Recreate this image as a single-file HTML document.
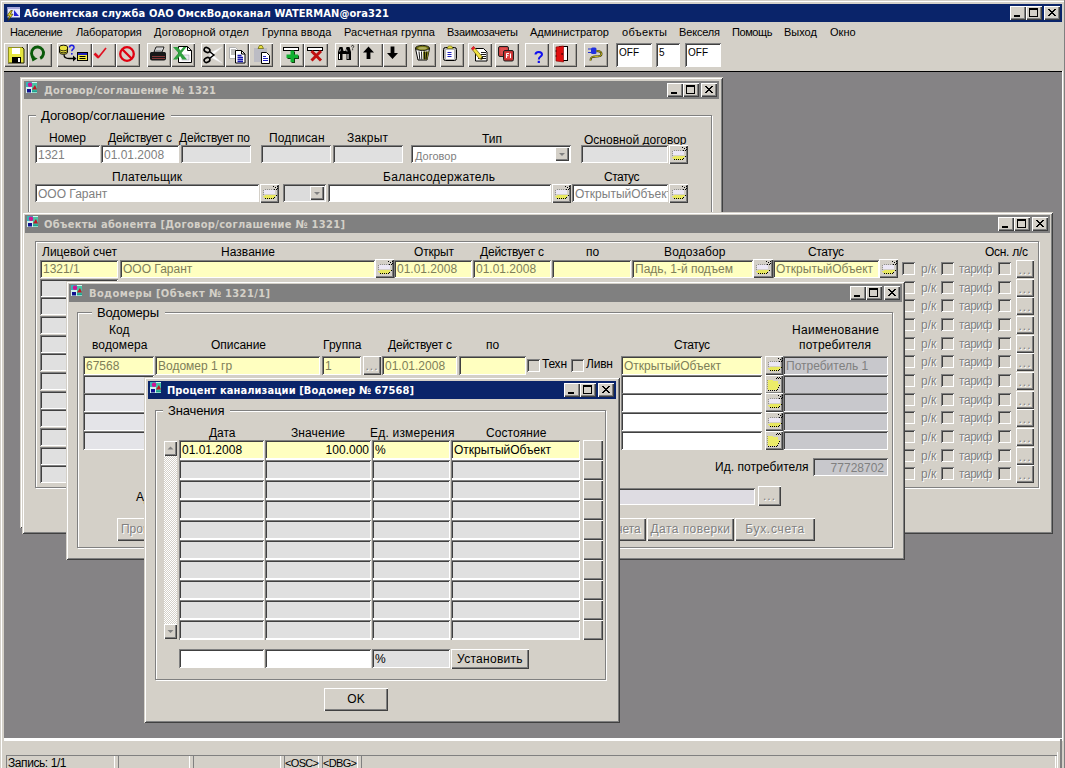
<!DOCTYPE html><html lang="ru"><head><meta charset="utf-8"><title>Абонентская служба</title><style>
html,body{margin:0;padding:0}
body{width:1065px;height:768px;overflow:hidden;background:#d4d0c8;position:relative;font:12px/14px 'Liberation Sans',sans-serif;color:#000}
#app{position:absolute;left:0;top:0;width:1065px;height:768px;overflow:hidden;background:#d4d0c8}
#app div,#app span,#app svg{position:absolute;box-sizing:border-box}
.t{white-space:pre;height:14px;line-height:14px}
.ft{white-space:pre;height:14px;line-height:14px}
.f2{box-shadow:inset 1px 1px 0 #808080,inset 0 -2px 0 #fff,inset -1px 0 0 #fff,inset 2px 2px 0 #404040;overflow:hidden}
.f{box-shadow:inset 1px 1px 0 #808080,inset -1px -1px 0 #fff,inset 2px 2px 0 #404040;overflow:hidden}
.b{background:#d4d0c8;box-shadow:inset 1px 1px 0 #fff,inset -1px -1px 0 #404040,inset -2px -2px 0 #808080;overflow:hidden}
.tbb{box-shadow:inset 1px 1px 0 #fff,inset -1px -1px 0 #484848,inset -2px -2px 0 #a4a098}
.cb3{box-shadow:inset 1px 1px 0 #fff,inset -1px -1px 0 #404040,inset -2px -2px 0 #808080}
.cb{background:#d4d0c8;box-shadow:inset 1px 1px 0 #808080,inset -1px -1px 0 #fff,inset 2px 2px 0 #404040}
.win{background:#d4d0c8;box-shadow:inset 1px 1px 0 #d4d0c8,inset -1px -1px 0 #404040,inset 2px 2px 0 #fff,inset -2px -2px 0 #808080}
.tb{height:18px}
.grp{border:1px solid #808080;box-shadow:1px 1px 0 #fff,inset 1px 1px 0 #fff}
.ic{left:0;top:0}
.dots{left:0;right:0;top:3px;text-align:center;color:#808080;text-shadow:1px 1px 0 #fff;font-size:12px;line-height:14px;letter-spacing:1px}
.sbt{background-color:#d4d0c8;background-image:linear-gradient(45deg,#fff 25%,transparent 25%,transparent 75%,#fff 75%),linear-gradient(45deg,#fff 25%,transparent 25%,transparent 75%,#fff 75%);background-size:2px 2px;background-position:0 0,1px 1px}
.bt{left:0;right:0;text-align:center;white-space:pre;line-height:14px}
.dis{color:#808080;text-shadow:1px 1px 0 #fff}
</style></head><body><div id="app">
<div class="a" style="left:1px;top:1px;width:1064px;height:1px;background:#fff"></div>
<div class="a" style="left:1px;top:1px;width:1px;height:767px;background:#fff"></div>
<div class="a" style="left:1064px;top:0;width:1px;height:768px;background:#808080"></div>
<div class="a" style="left:4px;top:4px;width:1058px;height:18px;background:#0a246a"></div>
<div class="a" style="left:6px;top:5px;width:16px;height:16px"><svg class="ic" width="16" height="16" viewBox="0 0 16 16"><rect x="1.500" y="2" width="12.500" height="10.500" fill="#e6e6fc"/><rect x="1.500" y="2" width="12.500" height="2" fill="#a8a8dc"/><path d="M8 5l5 6H8z" fill="#2424d4"/><path d="M4.800 5.500L1 10.800h2.600L2 15.500l5-6.300H4.400l2-3.700z" fill="#f0e020" stroke="#3c3000" stroke-width=".7"/></svg></div>
<span class="t " style="top:7px;left:24px;font-size:11px;font-weight:bold;font-family:'DejaVu Sans Condensed','DejaVu Sans','Liberation Sans',sans-serif;color:#fff;letter-spacing:0.10px;">Абонентская служба ОАО ОмскВодоканал WATERMAN@ora321</span>
<div class="b cb3" style="left:1010px;top:6px;width:16px;height:14px;"><svg width="16" height="14" class="ic"><rect x="4" y="9" width="6" height="2" fill="#000"/></svg></div>
<div class="b cb3" style="left:1026px;top:6px;width:16px;height:14px;"><svg width="16" height="14" class="ic"><rect x="3.5" y="2.5" width="8" height="8" fill="none" stroke="#000"/><rect x="3" y="2" width="9" height="2" fill="#000"/></svg></div>
<div class="b cb3" style="left:1044px;top:6px;width:16px;height:14px;"><svg width="16" height="14" class="ic"><path d="M4 3l7 7M5 3l7 7M11 3l-7 7M12 3l-7 7" stroke="#000" stroke-width="1" fill="none" shape-rendering="crispEdges"/></svg></div>
<span class="t " style="top:25px;left:10px;font-size:11px;letter-spacing:-0.46px;">Население</span>
<span class="t " style="top:25px;left:76px;font-size:11px;letter-spacing:-0.13px;">Лаборатория</span>
<span class="t " style="top:25px;left:154px;font-size:11px;letter-spacing:0.19px;">Договорной отдел</span>
<span class="t " style="top:25px;left:262px;font-size:11px;letter-spacing:0.13px;">Группа ввода</span>
<span class="t " style="top:25px;left:344px;font-size:11px;letter-spacing:0.08px;">Расчетная группа</span>
<span class="t " style="top:25px;left:447px;font-size:11px;letter-spacing:-0.23px;">Взаимозачеты</span>
<span class="t " style="top:25px;left:530px;font-size:11px;letter-spacing:-0.04px;">Администратор</span>
<span class="t " style="top:25px;left:622px;font-size:11px;letter-spacing:0.34px;">объекты</span>
<span class="t " style="top:25px;left:679px;font-size:11px;letter-spacing:-0.16px;">Векселя</span>
<span class="t " style="top:25px;left:732px;font-size:11px;letter-spacing:-0.42px;">Помощь</span>
<span class="t " style="top:25px;left:784px;font-size:11px;letter-spacing:-0.01px;">Выход</span>
<span class="t " style="top:25px;left:830px;font-size:11px;letter-spacing:0.01px;">Окно</span>
<div class="b tbb" style="left:4px;top:43px;width:24px;height:24px;"><svg class="ic" width="23" height="23" viewBox="0 0 23 23"><path d="M4 4h14l2 2v14H4z" fill="#e4e440"/><path d="M18 4l2 2v14H4" fill="none" stroke="#202000" stroke-width="1"/><path d="M4.500 20V4.500H18" fill="none" stroke="#909020" stroke-width="1"/><rect x="8" y="5" width="8" height="6" fill="#fff"/><rect x="8" y="14" width="9" height="6" fill="#000"/><rect x="14" y="15" width="2" height="4" fill="#fff"/></svg></div>
<div class="b tbb" style="left:28px;top:43px;width:24px;height:24px;"><svg class="ic" width="23" height="23" viewBox="0 0 23 23"><path d="M12.200 15.400A6 6 0 1 0 6 14.900" fill="none" stroke="#0a5a0a" stroke-width="2.900"/><path d="M2.700 12.500l7 3-5.200 3z" fill="#0a5a0a"/></svg></div>
<div class="b tbb" style="left:57px;top:43px;width:35px;height:24px;"><svg class="ic" width="34" height="23" viewBox="0 0 34 23"><ellipse cx="6.5" cy="4" rx="4" ry="1.8" fill="#e8e040" stroke="#000" stroke-width=".9"/><path d="M2.5 4v5.5c0 1 1.8 1.8 4 1.8s4-.8 4-1.8V4" fill="#e8e040" stroke="#000" stroke-width=".9"/><path d="M2.5 6c0 1 1.8 1.8 4 1.8s4-.8 4-1.8M2.5 8c0 1 1.8 1.8 4 1.8s4-.8 4-1.8" fill="none" stroke="#000" stroke-width=".8"/><path d="M12.5 4.5c0-3 4.5-3 4.500 0 0 1.800-2.200 1.600-2.200 3.800" fill="none" stroke="#2020e0" stroke-width="1.500"/><rect x="14" y="10" width="1.600" height="1.600" fill="#2020e0"/><path d="M7 11.500c0 3 2 4 5 4h5" fill="none" stroke="#000" stroke-width="1.300"/><path d="M16 12.500l3.500 3-3.500 3z" fill="#000"/><rect x="20.500" y="9.500" width="10" height="8" fill="#f0e840" stroke="#000"/><rect x="21" y="10" width="9" height="2" fill="#2020c0"/><path d="M22.500 13.500h6M22.500 15.500h6" stroke="#000"/></svg></div>
<div class="b tbb" style="left:92px;top:43px;width:24px;height:24px;"><svg class="ic" width="23" height="23" viewBox="0 0 23 23"><path d="M2.500 10.500l4 4" fill="none" stroke="#e01020" stroke-width="2.600"/><path d="M6 15l8-10" fill="none" stroke="#e01020" stroke-width="1.700"/></svg></div>
<div class="b tbb" style="left:116px;top:43px;width:24px;height:24px;"><svg class="ic" width="23" height="23" viewBox="0 0 23 23"><circle cx="11" cy="11" r="6.800" fill="none" stroke="#e00010" stroke-width="2.300"/><path d="M6 6l10 10" stroke="#e00010" stroke-width="2.300"/></svg></div>
<div class="b tbb" style="left:147px;top:43px;width:24px;height:24px;"><svg class="ic" width="23" height="23" viewBox="0 0 23 23"><path d="M7 9l2-5h8l-2 5z" fill="#fff" stroke="#000" stroke-width=".9"/><path d="M3 10.500c0-1 1-1.500 2-1.500h12c1 0 2 .5 2 1.500v5c0 1-1 2-2 2h-12c-1 0-2-1-2-2z" fill="#181818"/><path d="M5 13.500h13M5 15.500h13" stroke="#a04040" stroke-width=".8"/><path d="M9 6h6M8.500 7.500h6" stroke="#808080" stroke-width=".7"/></svg></div>
<div class="b tbb" style="left:171px;top:43px;width:24px;height:24px;"><svg class="ic" width="23" height="23" viewBox="0 0 23 23"><path d="M7.500 3.500h9l4 4v12h-13z" fill="#fff" stroke="#000"/><path d="M16.500 3.500v4h4" fill="none" stroke="#000"/><rect x="11" y="12" width="7" height="5" fill="#e8e8f0" stroke="#a0a0b0" stroke-width=".6"/><path d="M2 4l4.500 0 3 3.500 3-3.500 3 0-5 6 5.500 6.500-4.500 0-2.500-3.500-3 3.500-4 0 5.500-6.500z" fill="#30a040"/></svg></div>
<div class="b tbb" style="left:201px;top:43px;width:24px;height:24px;"><svg class="ic" width="23" height="23" viewBox="0 0 23 23"><path d="M9 10l12-6-9 8 9 8-12-6z" fill="#fff" stroke="#e8e8e8" stroke-width=".5"/><ellipse cx="6" cy="7" rx="3" ry="2.300" fill="none" stroke="#000" stroke-width="1.600" transform="rotate(25 6 7)"/><ellipse cx="6" cy="17" rx="3" ry="2.300" fill="none" stroke="#000" stroke-width="1.600" transform="rotate(-25 6 17)"/><path d="M8.500 8.500l5 4M8.500 15.500l5-4" stroke="#000" stroke-width="1.600"/></svg></div>
<div class="b tbb" style="left:225px;top:43px;width:24px;height:24px;"><svg class="ic" width="23" height="23" viewBox="0 0 23 23"><path d="M4.500 4.500h6l3 3v8h-9z" fill="#fff" stroke="#a8a8a8" stroke-width=".9"/><path d="M6 7h5M6 9h5M6 11h4" stroke="#707070" stroke-width=".9"/><path d="M10.500 7.500h6l3.500 3.500v9h-9.500z" fill="#fff" stroke="#000"/><path d="M16.500 7.500v3.500h3.500" fill="none" stroke="#000"/><path d="M12.500 12.500h4M12.500 14.500h5.500M12.500 16.500h5.500M12.500 18.500h5.500" stroke="#1818b0" stroke-width="1.300"/></svg></div>
<div class="b tbb" style="left:249px;top:43px;width:24px;height:24px;"><svg class="ic" width="23" height="23" viewBox="0 0 23 23"><rect x="5" y="5" width="13" height="14" fill="#bcbcc4"/><path d="M9 5.500l1.500-3h2.500l1.500 3z" fill="#e8e040" stroke="#606000" stroke-width=".7"/><path d="M12.500 9.500h5l3 3v8h-8z" fill="#fff" stroke="#000"/><path d="M14 13.500h3M14 15.500h5M14 17.500h5" stroke="#2020c0" stroke-width="1.200"/></svg></div>
<div class="b tbb" style="left:280px;top:43px;width:24px;height:24px;"><svg class="ic" width="23" height="23" viewBox="0 0 23 23"><rect x="3.500" y="4.500" width="15" height="3" fill="#fff" stroke="#000"/><path d="M11.500 8.500h3.500v4h4v3.500h-4v4h-3.500v-4h-4v-3.500h4z" fill="#104010"/><path d="M10.500 7.500h3.500v4h4v3.500h-4v4h-3.500v-4h-4v-3.500h4z" fill="#10b030"/></svg></div>
<div class="b tbb" style="left:304px;top:43px;width:24px;height:24px;"><svg class="ic" width="23" height="23" viewBox="0 0 23 23"><rect x="3.500" y="4.500" width="15" height="3" fill="#fff" stroke="#000"/><path d="M7.500 8l9.500 9.500M17 8l-9.500 9.500" stroke="#c01010" stroke-width="3"/></svg></div>
<div class="b tbb" style="left:335px;top:43px;width:24px;height:24px;"><svg class="ic" width="23" height="23" viewBox="0 0 23 23"><path d="M3 9l1.500-5h3l1 4h2l1-4h3l1.500 5v8h-4.500v-6h-4v6h-4.500z" fill="#000"/><path d="M4.500 11v5M13 11v5" stroke="#fff" stroke-width="1"/><path d="M5.500 6.500l-.8 2M11.500 6.500l.5 2" stroke="#fff" stroke-width=".8"/><path d="M16.500 3.500c0-1.500 2.200-1.500 2.200 0 0 1-1.100 1-1.100 2" fill="none" stroke="#000" stroke-width=".8"/><rect x="17.200" y="6.300" width=".9" height=".9" fill="#000"/></svg></div>
<div class="b tbb" style="left:359px;top:43px;width:24px;height:24px;"><svg class="ic" width="23" height="23" viewBox="0 0 23 23"><path d="M9.500 3.500l5.500 6h-3.600v6.500h-3.800v-6.500h-3.600z" fill="#000"/></svg></div>
<div class="b tbb" style="left:383px;top:43px;width:24px;height:24px;"><svg class="ic" width="23" height="23" viewBox="0 0 23 23"><path d="M9.500 16l5.500-6h-3.600v-6.500h-3.800v6.500h-3.600z" fill="#000"/></svg></div>
<div class="b tbb" style="left:412px;top:43px;width:24px;height:24px;"><svg class="ic" width="23" height="23" viewBox="0 0 23 23"><path d="M3.500 5.500l2.500 11.500h9l2.500-11.500z" fill="#fff" stroke="#000"/><ellipse cx="10.500" cy="5" rx="7" ry="2.600" fill="#707010" stroke="#000" stroke-width=".8"/><ellipse cx="10.500" cy="5.200" rx="4.500" ry="1.300" fill="#b0b060"/><path d="M11 8.500l.3 8h4l1.500-8z" fill="#808018"/><path d="M7 8.500l.8 8M9.500 8.500l.3 8M12.500 8.500l-.2 8M14.800 8.500l-.8 8" stroke="#000" stroke-width=".9"/></svg></div>
<div class="b tbb" style="left:440px;top:43px;width:24px;height:24px;"><svg class="ic" width="23" height="23" viewBox="0 0 23 23"><rect x="3.500" y="4.500" width="13" height="13" rx="2" fill="#b8b8b8" stroke="#000"/><rect x="6" y="7" width="8" height="9" fill="#fff"/><path d="M7.500 9.500h4M7.500 11.500h4M7.500 13.500h4" stroke="#2020c0" stroke-width="1.200"/><path d="M7 5.500l1.500-2.500h3l1.500 2.500z" fill="#e8e040" stroke="#606000" stroke-width=".6"/></svg></div>
<div class="b tbb" style="left:468px;top:43px;width:24px;height:24px;"><svg class="ic" width="23" height="23" viewBox="0 0 23 23"><path d="M7.500 5.500h8l3.500 3.500v9h-11.500z" fill="#fff" stroke="#000"/><path d="M13 9.500h5M13 11.500h5M10 15.500h8M13 13.500h5" stroke="#000" stroke-width=".9"/><path d="M3.500 5.500l2-2 9 10.500-.5 2.500-2.500-.5z" fill="#f0e040" stroke="#605000" stroke-width=".7"/><path d="M3 5.500l2.500-2.500 1.800 2-2.500 2.500z" fill="#e02030"/><path d="M12 15.500l2.500.5.500-2.500" fill="#000"/></svg></div>
<div class="b tbb" style="left:495px;top:43px;width:24px;height:24px;"><svg class="ic" width="23" height="23" viewBox="0 0 23 23"><rect x="3.500" y="3.500" width="10" height="10" rx="1.500" fill="#d04040" stroke="#202020"/><rect x="5.500" y="5" width="6" height="6" fill="#e05050"/><rect x="8.500" y="7.500" width="10" height="10.500" rx="1.500" fill="#c03030" stroke="#202020"/><rect x="10.500" y="9.500" width="6" height="6.500" fill="#e04040"/><path d="M11.500 15v-4.500h2.500M11.500 12.700h2M15.500 10.500v4.500" stroke="#fff" stroke-width="1" fill="none"/></svg></div>
<div class="b tbb" style="left:525px;top:43px;width:24px;height:24px;"><svg class="ic" width="23" height="23" viewBox="0 0 23 23"><path d="M10.500 11.500c0-3.500 6.500-3.500 6.500 0 0 2.200-3.200 2-3.200 5" fill="none" stroke="#1010f0" stroke-width="2"/><rect x="12.700" y="17.800" width="2.200" height="2.200" fill="#1010f0"/></svg></div>
<div class="b tbb" style="left:553px;top:43px;width:24px;height:24px;"><svg class="ic" width="23" height="23" viewBox="0 0 23 23"><rect x="6.500" y="3.500" width="8" height="14" fill="#fff" stroke="#000"/><path d="M3 4l7.500-1v16l-7.500-1z" fill="#e01010"/><path d="M3 4l7.500-1v16l-7.500-1z" fill="none" stroke="#800000" stroke-width=".6"/><rect x="8.500" y="10" width="1.200" height="2" fill="#400000"/><path d="M2.500 8h1M2.500 13h1" stroke="#000"/></svg></div>
<div class="b tbb" style="left:584px;top:43px;width:24px;height:24px;"><svg class="ic" width="23" height="23" viewBox="0 0 23 23"><path d="M4 6h3.500M4 9.500h3.500" stroke="#2030d0" stroke-width="1.200"/><rect x="7" y="4.500" width="5.500" height="6.500" rx="1.500" fill="#2030e0"/><path d="M12.500 8c4 0 5 1 5 3s-2 2.500-5.500 2.500-5.500.5-5.500 4" fill="none" stroke="#303000" stroke-width="2"/><path d="M12.500 8c4 0 5 1 5 3s-2 2.500-5.500 2.500-5.500.5-5.500 4" fill="none" stroke="#c8b820" stroke-width="1"/></svg></div>
<div class="f" style="left:616px;top:43px;width:36px;height:24px;background:#fff;"></div>
<span class="t " style="top:46px;left:619px;font-size:10px;">OFF</span>
<div class="f" style="left:656px;top:43px;width:24px;height:24px;background:#fff;"></div>
<span class="t " style="top:46px;left:659px;font-size:10px;">5</span>
<div class="f" style="left:685px;top:43px;width:36px;height:24px;background:#fff;"></div>
<span class="t " style="top:46px;left:688px;font-size:10px;">OFF</span>
<div class="a" style="left:4px;top:71px;width:1058px;height:667px;background:#858385"></div>
<div class="a" style="left:4px;top:71px;width:1058px;height:1px;background:#000"></div>
<div class="a" style="left:4px;top:738px;width:1059px;height:3px;background:#fff"></div>
<div class="a" style="left:1062px;top:71px;width:1px;height:670px;background:#fff"></div>
<div class="a" style="left:6px;top:755px;width:1051px;height:1px;background:#808080"></div>
<div class="a" style="left:6px;top:756px;width:109px;height:14px;border-left:1px solid #808080;border-right:1px solid #fff"></div>
<div class="a" style="left:118px;top:756px;width:72px;height:14px;border-left:1px solid #808080;border-right:1px solid #fff"></div>
<div class="a" style="left:193px;top:756px;width:88px;height:14px;border-left:1px solid #808080;border-right:1px solid #fff"></div>
<div class="a" style="left:284px;top:756px;width:35px;height:14px;border-left:1px solid #808080;border-right:1px solid #fff"></div>
<div class="a" style="left:322px;top:756px;width:36px;height:14px;border-left:1px solid #808080;border-right:1px solid #fff"></div>
<div class="a" style="left:361px;top:756px;width:695px;height:14px;border-left:1px solid #808080;border-right:1px solid #fff"></div>
<div class="a" style="left:1060px;top:739px;width:2px;height:29px;background:#808080"></div>
<div class="a" style="left:1057px;top:752px;width:1px;height:16px;background:#fff"></div>
<span class="t " style="top:756px;left:8px;letter-spacing:-0.42px;">Запись: 1/1</span>
<span class="t " style="top:756px;left:285px;font-size:11px;letter-spacing:-0.67px;">&lt;OSC&gt;</span>
<span class="t " style="top:756px;left:323px;font-size:11px;letter-spacing:-0.67px;">&lt;DBG&gt;</span>
<div class="win" style="left:20px;top:77px;width:703px;height:451px"></div>
<div class="tb" style="left:24px;top:81px;width:695px;background:#808080"></div>
<div class="a" style="left:26px;top:82px;width:12px;height:12px"><svg class="ic" width="12" height="12" viewBox="0 0 12 12"><rect x="0" y="0" width="11" height="11" fill="#d4f2ee"/><rect x="0" y="0" width="6" height="5" fill="#38b4b8"/><rect x="6" y="1" width="5" height="9.500" fill="#48c4a4"/><circle cx="4" cy="2.800" r="2.200" fill="#d01494"/><path d="M6 7.500l3-4.500 2 4.500z" fill="#c01424"/><rect x="1" y="7" width="4" height="3.500" fill="#101090"/><rect x="6" y="8.500" width="5" height="1.500" fill="#20a090"/></svg></div>
<span class="t " style="top:84px;left:44px;font-size:11px;font-weight:bold;font-family:'DejaVu Sans Condensed','DejaVu Sans','Liberation Sans',sans-serif;color:#d4d0c8;letter-spacing:0.20px;">Договор/соглашение № 1321</span>
<div class="b cb3" style="left:667px;top:83px;width:16px;height:14px;"><svg width="16" height="14" class="ic"><rect x="4" y="9" width="6" height="2" fill="#000"/></svg></div>
<div class="b cb3" style="left:683px;top:83px;width:16px;height:14px;"><svg width="16" height="14" class="ic"><rect x="3.5" y="2.5" width="8" height="8" fill="none" stroke="#000"/><rect x="3" y="2" width="9" height="2" fill="#000"/></svg></div>
<div class="b cb3" style="left:701px;top:83px;width:16px;height:14px;"><svg width="16" height="14" class="ic"><path d="M4 3l7 7M5 3l7 7M11 3l-7 7M12 3l-7 7" stroke="#000" stroke-width="1" fill="none" shape-rendering="crispEdges"/></svg></div>
<div class="grp" style="left:28px;top:115px;width:684px;height:183px"></div>
<div class="a" style="left:36px;top:113px;width:135px;height:6px;background:#d4d0c8"></div>
<span class="t " style="top:109px;left:41px;font-size:13px;letter-spacing:-0.07px;">Договор/соглашение</span>
<span class="t " style="top:131px;left:49px;">Номер</span>
<span class="t " style="top:131px;left:108px;letter-spacing:-0.21px;">Действует с</span>
<span class="t " style="top:131px;left:179px;letter-spacing:-0.21px;">Действует по</span>
<span class="t " style="top:131px;left:269px;letter-spacing:0.14px;">Подписан</span>
<span class="t " style="top:131px;left:347px;letter-spacing:0.21px;">Закрыт</span>
<span class="t " style="top:132px;left:482px;">Тип</span>
<span class="t " style="top:133px;left:584px;letter-spacing:0.01px;">Основной договор</span>
<div class="f" style="left:35px;top:145px;width:65px;height:18px;background:#fff;"><span class="ft" style="left:3px;top:3px;color:#808080">1321</span></div>
<div class="f" style="left:101px;top:145px;width:78px;height:18px;background:#fff;"><span class="ft" style="left:3px;top:3px;color:#808080">01.01.2008</span></div>
<div class="f" style="left:181px;top:145px;width:70px;height:18px;background:#e0e0e0;"></div>
<div class="f" style="left:261px;top:145px;width:70px;height:18px;background:#e0e0e0;"></div>
<div class="f" style="left:333px;top:145px;width:70px;height:18px;background:#e0e0e0;"></div>
<div class="f" style="left:411px;top:145px;width:160px;height:18px;background:#fff;"></div>
<span class="t" style="left:415px;top:149px;color:#808080;font-size:11px">Договор</span>
<div class="b" style="left:555px;top:147px;width:14px;height:14px;"><svg class="ic" width="14" height="14"><path d="M4 6h6l-3 3z" fill="#808080"/><path d="M5 7h6l-3 3z" fill="#fff" opacity=".0"/></svg></div>
<div class="f" style="left:581px;top:145px;width:87px;height:18px;background:#e0e0e0;"></div>
<div class="b" style="left:669px;top:145px;width:19px;height:19px;"><svg class="ic" width="19" height="19" viewBox="0 0 19 19" shape-rendering="crispEdges"><rect x="4" y="6" width="11" height="4" fill="#ece8f6"/><path d="M3 12.500L6 11h10l-3 3.500H5z" fill="#e8e860"/><path d="M5 14.500h9" stroke="#000" stroke-dasharray="1 1"/><path d="M5 5.500h9" stroke="#909090" stroke-dasharray="1 1"/><path d="M3.500 6v5" stroke="#909090" stroke-dasharray="1 1"/><path d="M14 13.500h1M16 11.500h1M14 5.500h1M16 5.500h1M17 4.500h1M13 2.500h1M17 2.500h1M15 3.500h1" stroke="#000"/></svg></div>
<span class="t " style="top:170px;left:112px;letter-spacing:0.14px;">Плательщик</span>
<span class="t " style="top:170px;left:383px;letter-spacing:0.33px;">Балансодержатель</span>
<span class="t " style="top:170px;left:604px;letter-spacing:-0.49px;">Статус</span>
<div class="f" style="left:35px;top:184px;width:224px;height:18px;background:#fff;"><span class="ft" style="left:3px;top:3px;color:#808080">ООО Гарант</span></div>
<div class="b" style="left:260px;top:184px;width:19px;height:19px;"><svg class="ic" width="19" height="19" viewBox="0 0 19 19" shape-rendering="crispEdges"><rect x="4" y="6" width="11" height="4" fill="#ece8f6"/><path d="M3 12.500L6 11h10l-3 3.500H5z" fill="#e8e860"/><path d="M5 14.500h9" stroke="#000" stroke-dasharray="1 1"/><path d="M5 5.500h9" stroke="#909090" stroke-dasharray="1 1"/><path d="M3.500 6v5" stroke="#909090" stroke-dasharray="1 1"/><path d="M14 13.500h1M16 11.500h1M14 5.500h1M16 5.500h1M17 4.500h1M13 2.500h1M17 2.500h1M15 3.500h1" stroke="#000"/></svg></div>
<div class="f" style="left:283px;top:184px;width:43px;height:18px;background:#dcdcdc;"></div>
<div class="b" style="left:310px;top:186px;width:14px;height:14px;"><svg class="ic" width="14" height="14"><path d="M4 6h6l-3 3z" fill="#808080"/><path d="M5 7h6l-3 3z" fill="#fff" opacity=".0"/></svg></div>
<div class="f" style="left:328px;top:184px;width:223px;height:18px;background:#fff;"></div>
<div class="b" style="left:552px;top:184px;width:19px;height:19px;"><svg class="ic" width="19" height="19" viewBox="0 0 19 19" shape-rendering="crispEdges"><rect x="4" y="6" width="11" height="4" fill="#ece8f6"/><path d="M3 12.500L6 11h10l-3 3.500H5z" fill="#e8e860"/><path d="M5 14.500h9" stroke="#000" stroke-dasharray="1 1"/><path d="M5 5.500h9" stroke="#909090" stroke-dasharray="1 1"/><path d="M3.500 6v5" stroke="#909090" stroke-dasharray="1 1"/><path d="M14 13.500h1M16 11.500h1M14 5.500h1M16 5.500h1M17 4.500h1M13 2.500h1M17 2.500h1M15 3.500h1" stroke="#000"/></svg></div>
<div class="f" style="left:572px;top:184px;width:96px;height:18px;background:#fff;"><span class="ft" style="left:3px;top:3px;color:#808080">ОткрытыйОбъект</span></div>
<div class="b" style="left:669px;top:184px;width:19px;height:19px;"><svg class="ic" width="19" height="19" viewBox="0 0 19 19" shape-rendering="crispEdges"><rect x="4" y="6" width="11" height="4" fill="#ece8f6"/><path d="M3 12.500L6 11h10l-3 3.500H5z" fill="#e8e860"/><path d="M5 14.500h9" stroke="#000" stroke-dasharray="1 1"/><path d="M5 5.500h9" stroke="#909090" stroke-dasharray="1 1"/><path d="M3.500 6v5" stroke="#909090" stroke-dasharray="1 1"/><path d="M14 13.500h1M16 11.500h1M14 5.500h1M16 5.500h1M17 4.500h1M13 2.500h1M17 2.500h1M15 3.500h1" stroke="#000"/></svg></div>
<div class="win" style="left:22px;top:212px;width:1031px;height:322px"></div>
<div class="tb" style="left:25px;top:215px;width:1025px;background:#808080"></div>
<div class="a" style="left:27px;top:216px;width:12px;height:12px"><svg class="ic" width="12" height="12" viewBox="0 0 12 12"><rect x="0" y="0" width="11" height="11" fill="#d4f2ee"/><rect x="0" y="0" width="6" height="5" fill="#38b4b8"/><rect x="6" y="1" width="5" height="9.500" fill="#48c4a4"/><circle cx="4" cy="2.800" r="2.200" fill="#d01494"/><path d="M6 7.500l3-4.500 2 4.500z" fill="#c01424"/><rect x="1" y="7" width="4" height="3.500" fill="#101090"/><rect x="6" y="8.500" width="5" height="1.500" fill="#20a090"/></svg></div>
<span class="t " style="top:218px;left:44px;font-size:11px;font-weight:bold;font-family:'DejaVu Sans Condensed','DejaVu Sans','Liberation Sans',sans-serif;color:#d4d0c8;letter-spacing:0.32px;">Объекты абонента [Договор/соглашение № 1321]</span>
<div class="b cb3" style="left:998px;top:217px;width:16px;height:14px;"><svg width="16" height="14" class="ic"><rect x="4" y="9" width="6" height="2" fill="#000"/></svg></div>
<div class="b cb3" style="left:1014px;top:217px;width:16px;height:14px;"><svg width="16" height="14" class="ic"><rect x="3.5" y="2.5" width="8" height="8" fill="none" stroke="#000"/><rect x="3" y="2" width="9" height="2" fill="#000"/></svg></div>
<div class="b cb3" style="left:1032px;top:217px;width:16px;height:14px;"><svg width="16" height="14" class="ic"><path d="M4 3l7 7M5 3l7 7M11 3l-7 7M12 3l-7 7" stroke="#000" stroke-width="1" fill="none" shape-rendering="crispEdges"/></svg></div>
<div class="grp" style="left:35px;top:241px;width:1004px;height:247px"></div>
<span class="t " style="top:245px;left:42px;letter-spacing:0.01px;">Лицевой счет</span>
<span class="t " style="top:245px;left:221px;letter-spacing:0.05px;">Название</span>
<span class="t " style="top:245px;left:414px;letter-spacing:-0.17px;">Открыт</span>
<span class="t " style="top:245px;left:480px;letter-spacing:-0.21px;">Действует с</span>
<span class="t " style="top:245px;left:586px;">по</span>
<span class="t " style="top:245px;left:664px;letter-spacing:0.14px;">Водозабор</span>
<span class="t " style="top:245px;left:808px;letter-spacing:-0.39px;">Статус</span>
<span class="t " style="top:245px;left:985px;letter-spacing:-0.28px;">Осн. л/с</span>
<div class="f" style="left:40px;top:260px;width:78px;height:18px;background:#ffffc0;"><span class="ft" style="left:3px;top:2px;color:#7e7e58">1321/1</span></div>
<div class="f" style="left:120px;top:260px;width:255px;height:18px;background:#ffffc0;"><span class="ft" style="left:3px;top:2px;color:#7e7e58">ООО Гарант</span></div>
<div class="b" style="left:375px;top:259px;width:19px;height:19px;"><svg class="ic" width="19" height="19" viewBox="0 0 19 19" shape-rendering="crispEdges"><rect x="4" y="6" width="11" height="4" fill="#ece8f6"/><path d="M3 12.500L6 11h10l-3 3.500H5z" fill="#e8e860"/><path d="M5 14.500h9" stroke="#000" stroke-dasharray="1 1"/><path d="M5 5.500h9" stroke="#909090" stroke-dasharray="1 1"/><path d="M3.500 6v5" stroke="#909090" stroke-dasharray="1 1"/><path d="M14 13.500h1M16 11.500h1M14 5.500h1M16 5.500h1M17 4.500h1M13 2.500h1M17 2.500h1M15 3.500h1" stroke="#000"/></svg></div>
<div class="f" style="left:394px;top:260px;width:78px;height:18px;background:#ffffc0;"><span class="ft" style="left:3px;top:2px;color:#7e7e58">01.01.2008</span></div>
<div class="f" style="left:473px;top:260px;width:78px;height:18px;background:#ffffc0;"><span class="ft" style="left:3px;top:2px;color:#7e7e58">01.01.2008</span></div>
<div class="f" style="left:552px;top:260px;width:79px;height:18px;background:#ffffc0;"></div>
<div class="f" style="left:632px;top:260px;width:121px;height:18px;background:#ffffc0;"><span class="ft" style="left:3px;top:2px;color:#7e7e58">Падь, 1-й подъем</span></div>
<div class="b" style="left:753px;top:259px;width:20px;height:19px;"><svg class="ic" width="19" height="19" viewBox="0 0 19 19" shape-rendering="crispEdges"><rect x="4" y="6" width="11" height="4" fill="#ece8f6"/><path d="M3 12.500L6 11h10l-3 3.500H5z" fill="#e8e860"/><path d="M5 14.500h9" stroke="#000" stroke-dasharray="1 1"/><path d="M5 5.500h9" stroke="#909090" stroke-dasharray="1 1"/><path d="M3.500 6v5" stroke="#909090" stroke-dasharray="1 1"/><path d="M14 13.500h1M16 11.500h1M14 5.500h1M16 5.500h1M17 4.500h1M13 2.500h1M17 2.500h1M15 3.500h1" stroke="#000"/></svg></div>
<div class="f" style="left:773px;top:260px;width:106px;height:18px;background:#ffffc0;"><span class="ft" style="left:3px;top:2px;color:#7e7e58">ОткрытыйОбъект</span></div>
<div class="b" style="left:879px;top:259px;width:19px;height:19px;"><svg class="ic" width="19" height="19" viewBox="0 0 19 19" shape-rendering="crispEdges"><rect x="4" y="6" width="11" height="4" fill="#ece8f6"/><path d="M3 12.500L6 11h10l-3 3.500H5z" fill="#e8e860"/><path d="M5 14.500h9" stroke="#000" stroke-dasharray="1 1"/><path d="M5 5.500h9" stroke="#909090" stroke-dasharray="1 1"/><path d="M3.500 6v5" stroke="#909090" stroke-dasharray="1 1"/><path d="M14 13.500h1M16 11.500h1M14 5.500h1M16 5.500h1M17 4.500h1M13 2.500h1M17 2.500h1M15 3.500h1" stroke="#000"/></svg></div>
<div class="cb" style="left:902px;top:262px;width:13px;height:13px;"></div>
<span class="t " style="top:262px;left:921px;color:#808080;text-shadow:1px 1px 0 #fff;">р/к</span>
<div class="cb" style="left:941px;top:262px;width:13px;height:13px;"></div>
<span class="t " style="top:262px;left:959px;color:#808080;text-shadow:1px 1px 0 #fff;letter-spacing:-0.45px;">тариф</span>
<div class="cb" style="left:998px;top:262px;width:13px;height:13px;"></div>
<div class="b" style="left:1016px;top:260px;width:18px;height:18px;"><span class="dots">...</span></div>
<div class="f" style="left:40px;top:279px;width:78px;height:18px;background:#e0e0e0;"></div>
<div class="cb" style="left:902px;top:281px;width:13px;height:13px;"></div>
<span class="t " style="top:281px;left:921px;color:#808080;text-shadow:1px 1px 0 #fff;">р/к</span>
<div class="cb" style="left:941px;top:281px;width:13px;height:13px;"></div>
<span class="t " style="top:281px;left:959px;color:#808080;text-shadow:1px 1px 0 #fff;letter-spacing:-0.45px;">тариф</span>
<div class="cb" style="left:998px;top:281px;width:13px;height:13px;"></div>
<div class="b" style="left:1016px;top:279px;width:18px;height:18px;"><span class="dots">...</span></div>
<div class="f" style="left:40px;top:297px;width:78px;height:18px;background:#e0e0e0;"></div>
<div class="cb" style="left:902px;top:299px;width:13px;height:13px;"></div>
<span class="t " style="top:299px;left:921px;color:#808080;text-shadow:1px 1px 0 #fff;">р/к</span>
<div class="cb" style="left:941px;top:299px;width:13px;height:13px;"></div>
<span class="t " style="top:299px;left:959px;color:#808080;text-shadow:1px 1px 0 #fff;letter-spacing:-0.45px;">тариф</span>
<div class="cb" style="left:998px;top:299px;width:13px;height:13px;"></div>
<div class="b" style="left:1016px;top:297px;width:18px;height:18px;"><span class="dots">...</span></div>
<div class="f" style="left:40px;top:316px;width:78px;height:18px;background:#e0e0e0;"></div>
<div class="cb" style="left:902px;top:318px;width:13px;height:13px;"></div>
<span class="t " style="top:318px;left:921px;color:#808080;text-shadow:1px 1px 0 #fff;">р/к</span>
<div class="cb" style="left:941px;top:318px;width:13px;height:13px;"></div>
<span class="t " style="top:318px;left:959px;color:#808080;text-shadow:1px 1px 0 #fff;letter-spacing:-0.45px;">тариф</span>
<div class="cb" style="left:998px;top:318px;width:13px;height:13px;"></div>
<div class="b" style="left:1016px;top:316px;width:18px;height:18px;"><span class="dots">...</span></div>
<div class="f" style="left:40px;top:335px;width:78px;height:18px;background:#e0e0e0;"></div>
<div class="cb" style="left:902px;top:337px;width:13px;height:13px;"></div>
<span class="t " style="top:337px;left:921px;color:#808080;text-shadow:1px 1px 0 #fff;">р/к</span>
<div class="cb" style="left:941px;top:337px;width:13px;height:13px;"></div>
<span class="t " style="top:337px;left:959px;color:#808080;text-shadow:1px 1px 0 #fff;letter-spacing:-0.45px;">тариф</span>
<div class="cb" style="left:998px;top:337px;width:13px;height:13px;"></div>
<div class="b" style="left:1016px;top:335px;width:18px;height:18px;"><span class="dots">...</span></div>
<div class="f" style="left:40px;top:353px;width:78px;height:18px;background:#e0e0e0;"></div>
<div class="cb" style="left:902px;top:355px;width:13px;height:13px;"></div>
<span class="t " style="top:355px;left:921px;color:#808080;text-shadow:1px 1px 0 #fff;">р/к</span>
<div class="cb" style="left:941px;top:355px;width:13px;height:13px;"></div>
<span class="t " style="top:355px;left:959px;color:#808080;text-shadow:1px 1px 0 #fff;letter-spacing:-0.45px;">тариф</span>
<div class="cb" style="left:998px;top:355px;width:13px;height:13px;"></div>
<div class="b" style="left:1016px;top:353px;width:18px;height:18px;"><span class="dots">...</span></div>
<div class="f" style="left:40px;top:372px;width:78px;height:18px;background:#e0e0e0;"></div>
<div class="cb" style="left:902px;top:374px;width:13px;height:13px;"></div>
<span class="t " style="top:374px;left:921px;color:#808080;text-shadow:1px 1px 0 #fff;">р/к</span>
<div class="cb" style="left:941px;top:374px;width:13px;height:13px;"></div>
<span class="t " style="top:374px;left:959px;color:#808080;text-shadow:1px 1px 0 #fff;letter-spacing:-0.45px;">тариф</span>
<div class="cb" style="left:998px;top:374px;width:13px;height:13px;"></div>
<div class="b" style="left:1016px;top:372px;width:18px;height:18px;"><span class="dots">...</span></div>
<div class="f" style="left:40px;top:391px;width:78px;height:18px;background:#e0e0e0;"></div>
<div class="cb" style="left:902px;top:393px;width:13px;height:13px;"></div>
<span class="t " style="top:393px;left:921px;color:#808080;text-shadow:1px 1px 0 #fff;">р/к</span>
<div class="cb" style="left:941px;top:393px;width:13px;height:13px;"></div>
<span class="t " style="top:393px;left:959px;color:#808080;text-shadow:1px 1px 0 #fff;letter-spacing:-0.45px;">тариф</span>
<div class="cb" style="left:998px;top:393px;width:13px;height:13px;"></div>
<div class="b" style="left:1016px;top:391px;width:18px;height:18px;"><span class="dots">...</span></div>
<div class="f" style="left:40px;top:409px;width:78px;height:18px;background:#e0e0e0;"></div>
<div class="cb" style="left:902px;top:411px;width:13px;height:13px;"></div>
<span class="t " style="top:411px;left:921px;color:#808080;text-shadow:1px 1px 0 #fff;">р/к</span>
<div class="cb" style="left:941px;top:411px;width:13px;height:13px;"></div>
<span class="t " style="top:411px;left:959px;color:#808080;text-shadow:1px 1px 0 #fff;letter-spacing:-0.45px;">тариф</span>
<div class="cb" style="left:998px;top:411px;width:13px;height:13px;"></div>
<div class="b" style="left:1016px;top:409px;width:18px;height:18px;"><span class="dots">...</span></div>
<div class="f" style="left:40px;top:428px;width:78px;height:18px;background:#e0e0e0;"></div>
<div class="cb" style="left:902px;top:430px;width:13px;height:13px;"></div>
<span class="t " style="top:430px;left:921px;color:#808080;text-shadow:1px 1px 0 #fff;">р/к</span>
<div class="cb" style="left:941px;top:430px;width:13px;height:13px;"></div>
<span class="t " style="top:430px;left:959px;color:#808080;text-shadow:1px 1px 0 #fff;letter-spacing:-0.45px;">тариф</span>
<div class="cb" style="left:998px;top:430px;width:13px;height:13px;"></div>
<div class="b" style="left:1016px;top:428px;width:18px;height:18px;"><span class="dots">...</span></div>
<div class="f" style="left:40px;top:447px;width:78px;height:18px;background:#e0e0e0;"></div>
<div class="cb" style="left:902px;top:449px;width:13px;height:13px;"></div>
<span class="t " style="top:449px;left:921px;color:#808080;text-shadow:1px 1px 0 #fff;">р/к</span>
<div class="cb" style="left:941px;top:449px;width:13px;height:13px;"></div>
<span class="t " style="top:449px;left:959px;color:#808080;text-shadow:1px 1px 0 #fff;letter-spacing:-0.45px;">тариф</span>
<div class="cb" style="left:998px;top:449px;width:13px;height:13px;"></div>
<div class="b" style="left:1016px;top:447px;width:18px;height:18px;"><span class="dots">...</span></div>
<div class="f" style="left:40px;top:465px;width:78px;height:18px;background:#e0e0e0;"></div>
<div class="cb" style="left:902px;top:467px;width:13px;height:13px;"></div>
<span class="t " style="top:467px;left:921px;color:#808080;text-shadow:1px 1px 0 #fff;">р/к</span>
<div class="cb" style="left:941px;top:467px;width:13px;height:13px;"></div>
<span class="t " style="top:467px;left:959px;color:#808080;text-shadow:1px 1px 0 #fff;letter-spacing:-0.45px;">тариф</span>
<div class="cb" style="left:998px;top:467px;width:13px;height:13px;"></div>
<div class="b" style="left:1016px;top:465px;width:18px;height:18px;"><span class="dots">...</span></div>
<div class="win" style="left:66px;top:281px;width:839px;height:279px"></div>
<div class="tb" style="left:69px;top:284px;width:833px;background:#808080"></div>
<div class="a" style="left:71px;top:285px;width:12px;height:12px"><svg class="ic" width="12" height="12" viewBox="0 0 12 12"><rect x="0" y="0" width="11" height="11" fill="#d4f2ee"/><rect x="0" y="0" width="6" height="5" fill="#38b4b8"/><rect x="6" y="1" width="5" height="9.500" fill="#48c4a4"/><circle cx="4" cy="2.800" r="2.200" fill="#d01494"/><path d="M6 7.500l3-4.500 2 4.500z" fill="#c01424"/><rect x="1" y="7" width="4" height="3.500" fill="#101090"/><rect x="6" y="8.500" width="5" height="1.500" fill="#20a090"/></svg></div>
<span class="t " style="top:287px;left:89px;font-size:11px;font-weight:bold;font-family:'DejaVu Sans Condensed','DejaVu Sans','Liberation Sans',sans-serif;color:#d4d0c8;letter-spacing:0.39px;">Водомеры [Объект № 1321/1]</span>
<div class="b cb3" style="left:850px;top:286px;width:16px;height:14px;"><svg width="16" height="14" class="ic"><rect x="4" y="9" width="6" height="2" fill="#000"/></svg></div>
<div class="b cb3" style="left:866px;top:286px;width:16px;height:14px;"><svg width="16" height="14" class="ic"><rect x="3.5" y="2.5" width="8" height="8" fill="none" stroke="#000"/><rect x="3" y="2" width="9" height="2" fill="#000"/></svg></div>
<div class="b cb3" style="left:884px;top:286px;width:16px;height:14px;"><svg width="16" height="14" class="ic"><path d="M4 3l7 7M5 3l7 7M11 3l-7 7M12 3l-7 7" stroke="#000" stroke-width="1" fill="none" shape-rendering="crispEdges"/></svg></div>
<div class="grp" style="left:77px;top:312px;width:816px;height:236px"></div>
<div class="a" style="left:92px;top:310px;width:73px;height:6px;background:#d4d0c8"></div>
<span class="t " style="top:306px;left:97px;font-size:13px;letter-spacing:-0.17px;">Водомеры</span>
<span class="t " style="top:323px;left:109px;">Код</span>
<span class="t " style="top:338px;left:92px;letter-spacing:0.13px;">водомера</span>
<span class="t " style="top:338px;left:211px;letter-spacing:-0.03px;">Описание</span>
<span class="t " style="top:338px;left:323px;letter-spacing:0.09px;">Группа</span>
<span class="t " style="top:338px;left:388px;letter-spacing:-0.21px;">Действует с</span>
<span class="t " style="top:338px;left:486px;">по</span>
<span class="t " style="top:338px;left:674px;letter-spacing:-0.39px;">Статус</span>
<span class="t " style="top:323px;left:792px;letter-spacing:0.33px;">Наименование</span>
<span class="t " style="top:338px;left:799px;letter-spacing:0.17px;">потребителя</span>
<div class="f" style="left:83px;top:356px;width:71px;height:19px;background:#ffffc0;"><span class="ft" style="left:3px;top:3px;color:#7e7e58">67568</span></div>
<div class="f" style="left:155px;top:356px;width:165px;height:19px;background:#ffffc0;"><span class="ft" style="left:3px;top:3px;color:#7e7e58">Водомер 1 гр</span></div>
<div class="f" style="left:322px;top:356px;width:39px;height:19px;background:#ffffc0;"><span class="ft" style="left:3px;top:3px;color:#7e7e58">1</span></div>
<div class="b" style="left:363px;top:356px;width:18px;height:19px;"><span class="dots">...</span></div>
<div class="f" style="left:382px;top:356px;width:75px;height:19px;background:#ffffc0;"><span class="ft" style="left:3px;top:3px;color:#7e7e58">01.01.2008</span></div>
<div class="f" style="left:459px;top:356px;width:67px;height:19px;background:#ffffc0;"></div>
<div class="cb" style="left:527px;top:359px;width:13px;height:13px;"></div>
<span class="t " style="top:357px;left:542px;letter-spacing:-0.23px;">Техн</span>
<div class="cb" style="left:571px;top:359px;width:13px;height:13px;"></div>
<span class="t " style="top:357px;left:586px;letter-spacing:-0.20px;">Ливн</span>
<div class="f" style="left:621px;top:356px;width:141px;height:19px;background:#ffffc0;"><span class="ft" style="left:3px;top:3px;color:#7e7e58">ОткрытыйОбъект</span></div>
<div class="b" style="left:765px;top:356px;width:18px;height:19px;"><svg class="ic" width="19" height="19" viewBox="0 0 19 19" shape-rendering="crispEdges"><rect x="4" y="6" width="11" height="4" fill="#ece8f6"/><path d="M3 12.500L6 11h10l-3 3.500H5z" fill="#e8e860"/><path d="M5 14.500h9" stroke="#000" stroke-dasharray="1 1"/><path d="M5 5.500h9" stroke="#909090" stroke-dasharray="1 1"/><path d="M3.500 6v5" stroke="#909090" stroke-dasharray="1 1"/><path d="M14 13.500h1M16 11.500h1M14 5.500h1M16 5.500h1M17 4.500h1M13 2.500h1M17 2.500h1M15 3.500h1" stroke="#000"/></svg></div>
<div class="f" style="left:783px;top:356px;width:105px;height:19px;background:#c8c8cc;"><span class="ft" style="left:3px;top:3px;color:#808080">Потребитель 1</span></div>
<div class="f" style="left:83px;top:375px;width:71px;height:19px;background:#e4e4e8;"></div>
<div class="f" style="left:621px;top:375px;width:141px;height:19px;background:#fff;"></div>
<div class="b" style="left:765px;top:375px;width:18px;height:19px;"><svg class="ic" width="19" height="19" viewBox="0 0 19 19" shape-rendering="crispEdges"><path d="M3 5h4l1 1h5v3h2l-3 6H3z" fill="#ecec68"/><path d="M3 15.500h9" stroke="#000" stroke-dasharray="1 1"/><path d="M2.500 5v10" stroke="#a0a060" stroke-dasharray="1 1"/><path d="M12 14.500h1M13 12.500h1M14 10.500h1M11 3.500h1M12 2.500h1M14 2.500h1M15 3.500h1M13 3.500h1" stroke="#000"/></svg></div>
<div class="f" style="left:783px;top:375px;width:105px;height:19px;background:#c8c8cc;"></div>
<div class="f" style="left:83px;top:393px;width:71px;height:19px;background:#e4e4e8;"></div>
<div class="f" style="left:621px;top:393px;width:141px;height:19px;background:#fff;"></div>
<div class="b" style="left:765px;top:393px;width:18px;height:19px;"><svg class="ic" width="19" height="19" viewBox="0 0 19 19" shape-rendering="crispEdges"><rect x="4" y="6" width="11" height="4" fill="#ece8f6"/><path d="M3 12.500L6 11h10l-3 3.500H5z" fill="#e8e860"/><path d="M5 14.500h9" stroke="#000" stroke-dasharray="1 1"/><path d="M5 5.500h9" stroke="#909090" stroke-dasharray="1 1"/><path d="M3.500 6v5" stroke="#909090" stroke-dasharray="1 1"/><path d="M14 13.500h1M16 11.500h1M14 5.500h1M16 5.500h1M17 4.500h1M13 2.500h1M17 2.500h1M15 3.500h1" stroke="#000"/></svg></div>
<div class="f" style="left:783px;top:393px;width:105px;height:19px;background:#c8c8cc;"></div>
<div class="f" style="left:83px;top:412px;width:71px;height:19px;background:#e4e4e8;"></div>
<div class="f" style="left:621px;top:412px;width:141px;height:19px;background:#fff;"></div>
<div class="b" style="left:765px;top:412px;width:18px;height:19px;"><svg class="ic" width="19" height="19" viewBox="0 0 19 19" shape-rendering="crispEdges"><rect x="4" y="6" width="11" height="4" fill="#ece8f6"/><path d="M3 12.500L6 11h10l-3 3.500H5z" fill="#e8e860"/><path d="M5 14.500h9" stroke="#000" stroke-dasharray="1 1"/><path d="M5 5.500h9" stroke="#909090" stroke-dasharray="1 1"/><path d="M3.500 6v5" stroke="#909090" stroke-dasharray="1 1"/><path d="M14 13.500h1M16 11.500h1M14 5.500h1M16 5.500h1M17 4.500h1M13 2.500h1M17 2.500h1M15 3.500h1" stroke="#000"/></svg></div>
<div class="f" style="left:783px;top:412px;width:105px;height:19px;background:#c8c8cc;"></div>
<div class="f" style="left:83px;top:431px;width:71px;height:19px;background:#e4e4e8;"></div>
<div class="f" style="left:621px;top:431px;width:141px;height:19px;background:#fff;"></div>
<div class="b" style="left:765px;top:431px;width:18px;height:19px;"><svg class="ic" width="19" height="19" viewBox="0 0 19 19" shape-rendering="crispEdges"><path d="M3 5h4l1 1h5v3h2l-3 6H3z" fill="#ecec68"/><path d="M3 15.500h9" stroke="#000" stroke-dasharray="1 1"/><path d="M2.500 5v10" stroke="#a0a060" stroke-dasharray="1 1"/><path d="M12 14.500h1M13 12.500h1M14 10.500h1M11 3.500h1M12 2.500h1M14 2.500h1M15 3.500h1M13 3.500h1" stroke="#000"/></svg></div>
<div class="f" style="left:783px;top:431px;width:105px;height:19px;background:#c8c8cc;"></div>
<span class="t " style="top:460px;left:715px;letter-spacing:0.06px;">Ид. потребителя</span>
<div class="f" style="left:813px;top:458px;width:75px;height:18px;background:#c8c8cc;"><span class="ft" style="right:4px;top:3px;color:#808080">77728702</span></div>
<span class="t " style="top:490px;left:136px;">Адрес</span>
<div class="f" style="left:180px;top:488px;width:575px;height:17px;background:#dedce2;"></div>
<div class="b" style="left:758px;top:486px;width:23px;height:20px;"><span class="dots">...</span></div>
<div class="b" style="left:117px;top:518px;width:64px;height:23px;"><span class="bt dis" style="top:4px;">Проценты</span></div>
<div class="b" style="left:552px;top:518px;width:94px;height:23px;"><span class="bt dis" style="top:4px;">Лицевые счета</span></div>
<div class="b" style="left:647px;top:518px;width:87px;height:23px;"><span class="bt dis" style="top:4px;letter-spacing:0.44px;">Дата поверки</span></div>
<div class="b" style="left:735px;top:518px;width:80px;height:23px;"><span class="bt dis" style="top:4px;letter-spacing:0.70px;">Бух.счета</span></div>
<div class="win" style="left:144px;top:377px;width:476px;height:346px"></div>
<div class="tb" style="left:148px;top:381px;width:468px;background:#0a246a"></div>
<div class="a" style="left:150px;top:382px;width:12px;height:12px"><svg class="ic" width="12" height="12" viewBox="0 0 12 12"><rect x="0" y="0" width="11" height="11" fill="#d4f2ee"/><rect x="0" y="0" width="6" height="5" fill="#38b4b8"/><rect x="6" y="1" width="5" height="9.500" fill="#48c4a4"/><circle cx="4" cy="2.800" r="2.200" fill="#d01494"/><path d="M6 7.500l3-4.500 2 4.500z" fill="#c01424"/><rect x="1" y="7" width="4" height="3.500" fill="#101090"/><rect x="6" y="8.500" width="5" height="1.500" fill="#20a090"/></svg></div>
<span class="t " style="top:384px;left:167px;font-size:11px;font-weight:bold;font-family:'DejaVu Sans Condensed','DejaVu Sans','Liberation Sans',sans-serif;color:#fff;letter-spacing:0.09px;">Процент канализации [Водомер № 67568]</span>
<div class="b cb3" style="left:564px;top:383px;width:16px;height:14px;"><svg width="16" height="14" class="ic"><rect x="4" y="9" width="6" height="2" fill="#000"/></svg></div>
<div class="b cb3" style="left:580px;top:383px;width:16px;height:14px;"><svg width="16" height="14" class="ic"><rect x="3.5" y="2.5" width="8" height="8" fill="none" stroke="#000"/><rect x="3" y="2" width="9" height="2" fill="#000"/></svg></div>
<div class="b cb3" style="left:598px;top:383px;width:16px;height:14px;"><svg width="16" height="14" class="ic"><path d="M4 3l7 7M5 3l7 7M11 3l-7 7M12 3l-7 7" stroke="#000" stroke-width="1" fill="none" shape-rendering="crispEdges"/></svg></div>
<div class="grp" style="left:155px;top:410px;width:451px;height:270px"></div>
<div class="a" style="left:163px;top:408px;width:67px;height:6px;background:#d4d0c8"></div>
<span class="t " style="top:404px;left:168px;font-size:13px;letter-spacing:-0.14px;">Значения</span>
<span class="t " style="top:426px;left:209px;letter-spacing:-0.03px;">Дата</span>
<span class="t " style="top:426px;left:291px;letter-spacing:0.11px;">Значение</span>
<span class="t " style="top:426px;left:370px;letter-spacing:0.20px;">Ед. измерения</span>
<span class="t " style="top:426px;left:486px;letter-spacing:0.08px;">Состояние</span>
<div class="a sbt" style="left:164px;top:441px;width:13px;height:198px"></div>
<div class="b" style="left:164px;top:441px;width:13px;height:15px;"><svg class="ic" width="13" height="15"><path d="M3.5 8.5h6l-3-3z" fill="#808080"/></svg></div>
<div class="b" style="left:164px;top:624px;width:13px;height:15px;"><svg class="ic" width="13" height="15"><path d="M3.5 6h6l-3 3z" fill="#808080"/></svg></div>
<div class="f2" style="left:179px;top:440px;width:85px;height:20px;background:#ffffc0;"><span class="ft" style="left:3px;top:3px;color:#000">01.01.2008</span></div>
<div class="f2" style="left:265px;top:440px;width:106px;height:20px;background:#ffffc0;"><span class="ft" style="right:2px;top:3px;color:#000">100.000</span></div>
<div class="f2" style="left:372px;top:440px;width:78px;height:20px;background:#ffffc0;"><span class="ft" style="left:3px;top:3px;color:#000">%</span></div>
<div class="f2" style="left:451px;top:440px;width:129px;height:20px;background:#ffffc0;"><span class="ft" style="left:3px;top:3px;color:#000">ОткрытыйОбъект</span></div>
<div class="b" style="left:583px;top:440px;width:20px;height:20px;"></div>
<div class="f2" style="left:179px;top:460px;width:85px;height:20px;background:#e0e0e0;"></div>
<div class="f2" style="left:265px;top:460px;width:106px;height:20px;background:#e0e0e0;"></div>
<div class="f2" style="left:372px;top:460px;width:78px;height:20px;background:#e0e0e0;"></div>
<div class="f2" style="left:451px;top:460px;width:129px;height:20px;background:#e0e0e0;"></div>
<div class="b" style="left:583px;top:460px;width:20px;height:20px;"></div>
<div class="f2" style="left:179px;top:480px;width:85px;height:20px;background:#e0e0e0;"></div>
<div class="f2" style="left:265px;top:480px;width:106px;height:20px;background:#e0e0e0;"></div>
<div class="f2" style="left:372px;top:480px;width:78px;height:20px;background:#e0e0e0;"></div>
<div class="f2" style="left:451px;top:480px;width:129px;height:20px;background:#e0e0e0;"></div>
<div class="b" style="left:583px;top:480px;width:20px;height:20px;"></div>
<div class="f2" style="left:179px;top:500px;width:85px;height:20px;background:#e0e0e0;"></div>
<div class="f2" style="left:265px;top:500px;width:106px;height:20px;background:#e0e0e0;"></div>
<div class="f2" style="left:372px;top:500px;width:78px;height:20px;background:#e0e0e0;"></div>
<div class="f2" style="left:451px;top:500px;width:129px;height:20px;background:#e0e0e0;"></div>
<div class="b" style="left:583px;top:500px;width:20px;height:20px;"></div>
<div class="f2" style="left:179px;top:520px;width:85px;height:20px;background:#e0e0e0;"></div>
<div class="f2" style="left:265px;top:520px;width:106px;height:20px;background:#e0e0e0;"></div>
<div class="f2" style="left:372px;top:520px;width:78px;height:20px;background:#e0e0e0;"></div>
<div class="f2" style="left:451px;top:520px;width:129px;height:20px;background:#e0e0e0;"></div>
<div class="b" style="left:583px;top:520px;width:20px;height:20px;"></div>
<div class="f2" style="left:179px;top:540px;width:85px;height:20px;background:#e0e0e0;"></div>
<div class="f2" style="left:265px;top:540px;width:106px;height:20px;background:#e0e0e0;"></div>
<div class="f2" style="left:372px;top:540px;width:78px;height:20px;background:#e0e0e0;"></div>
<div class="f2" style="left:451px;top:540px;width:129px;height:20px;background:#e0e0e0;"></div>
<div class="b" style="left:583px;top:540px;width:20px;height:20px;"></div>
<div class="f2" style="left:179px;top:560px;width:85px;height:20px;background:#e0e0e0;"></div>
<div class="f2" style="left:265px;top:560px;width:106px;height:20px;background:#e0e0e0;"></div>
<div class="f2" style="left:372px;top:560px;width:78px;height:20px;background:#e0e0e0;"></div>
<div class="f2" style="left:451px;top:560px;width:129px;height:20px;background:#e0e0e0;"></div>
<div class="b" style="left:583px;top:560px;width:20px;height:20px;"></div>
<div class="f2" style="left:179px;top:580px;width:85px;height:20px;background:#e0e0e0;"></div>
<div class="f2" style="left:265px;top:580px;width:106px;height:20px;background:#e0e0e0;"></div>
<div class="f2" style="left:372px;top:580px;width:78px;height:20px;background:#e0e0e0;"></div>
<div class="f2" style="left:451px;top:580px;width:129px;height:20px;background:#e0e0e0;"></div>
<div class="b" style="left:583px;top:580px;width:20px;height:20px;"></div>
<div class="f2" style="left:179px;top:600px;width:85px;height:20px;background:#e0e0e0;"></div>
<div class="f2" style="left:265px;top:600px;width:106px;height:20px;background:#e0e0e0;"></div>
<div class="f2" style="left:372px;top:600px;width:78px;height:20px;background:#e0e0e0;"></div>
<div class="f2" style="left:451px;top:600px;width:129px;height:20px;background:#e0e0e0;"></div>
<div class="b" style="left:583px;top:600px;width:20px;height:20px;"></div>
<div class="f2" style="left:179px;top:620px;width:85px;height:20px;background:#e0e0e0;"></div>
<div class="f2" style="left:265px;top:620px;width:106px;height:20px;background:#e0e0e0;"></div>
<div class="f2" style="left:372px;top:620px;width:78px;height:20px;background:#e0e0e0;"></div>
<div class="f2" style="left:451px;top:620px;width:129px;height:20px;background:#e0e0e0;"></div>
<div class="b" style="left:583px;top:620px;width:20px;height:20px;"></div>
<div class="f" style="left:179px;top:649px;width:85px;height:19px;background:#fff;"></div>
<div class="f" style="left:265px;top:649px;width:106px;height:19px;background:#fff;"></div>
<div class="f" style="left:372px;top:649px;width:78px;height:19px;background:#e0e0e0;"><span class="ft" style="left:3px;top:3px;color:#000">%</span></div>
<div class="b" style="left:451px;top:649px;width:78px;height:20px;"><span class="bt" style="top:3px;letter-spacing:0.28px;">Установить</span></div>
<div class="b" style="left:324px;top:688px;width:64px;height:23px;"><span class="bt" style="top:4px;">OK</span></div>
</div></body></html>
